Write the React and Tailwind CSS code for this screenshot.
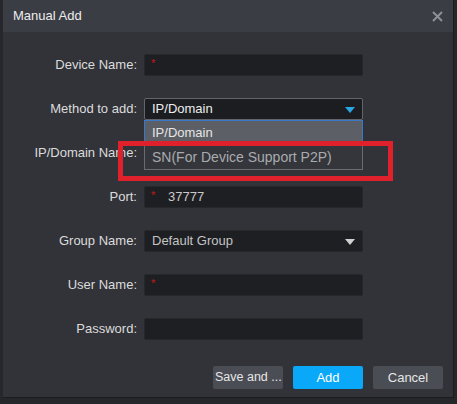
import React from 'react';

const font = { fontFamily: '"Liberation Sans", Arial, sans-serif' };

function Label({ children }) {
  return (
    <div className="w-[141px] shrink-0 whitespace-nowrap pr-[7px] text-right text-[13px] leading-[22px] text-[#dcdcdc]">
      {children}
    </div>
  );
}

function Star() {
  return <span className="absolute left-[6px] top-[1px] text-[11px] leading-[14px] text-[#c8161c]">*</span>;
}

function Input({ required, value }) {
  return (
    <div className="relative h-[22px] w-[219px] rounded-[2px] border border-[#26272b] bg-[#1e1f23]">
      {required && <Star />}
      {value && <span className="absolute left-[23px] top-0 text-[13px] leading-[20px] text-[#c9c9c9]">{value}</span>}
    </div>
  );
}

function Caret({ color }) {
  return (
    <svg width="10" height="6" viewBox="0 0 10 6" className="absolute right-[7px] top-[8px]">
      <path d="M0 0h10L5 6z" fill={color} />
    </svg>
  );
}

function Row({ label, children }) {
  return (
    <div className="flex h-[22px] items-center">
      <Label>{label}</Label>
      {children}
    </div>
  );
}

export default function App() {
  return (
    <div className="h-[404px] w-[457px] overflow-hidden bg-[#26272b] pl-[3px]" style={font}>
      <div className="relative flex h-[398px] w-[451px] flex-col border-b border-r border-[#1b1c1f] bg-[#313338]">
        {/* title bar */}
        <div className="flex h-[32px] shrink-0 items-center justify-between bg-[#3b3d44] pl-[10px] pr-[10px]">
          <span className="text-[13px] text-[#ececec]">Manual Add</span>
          <svg width="11" height="11" viewBox="0 0 11 11">
            <path d="M1 1l9 9M10 1l-9 9" stroke="#8e9095" strokeWidth="2" />
          </svg>
        </div>

        <div className="mt-[22px] flex flex-col gap-[22px]">
          <Row label="Device Name:">
            <Input required />
          </Row>

          <Row label="Method to add:">
            <div className="relative h-[22px] w-[219px] rounded-[2px] border border-[#62656b] bg-[#1c1d21]">
              <span className="absolute left-[7px] top-0 text-[13px] leading-[20px] text-[#ededed]">IP/Domain</span>
              <Caret color="#2aa6e6" />
              {/* open option list */}
              <div className="absolute left-[-1px] top-[21px] z-10 w-[219px]">
                <div className="h-[25px] border-x border-t border-[#3a78c8] bg-[#5c5f65] pl-[7px] text-[13px] leading-[24px] text-[#e6e6e6]">
                  IP/Domain
                </div>
                <div className="h-[25px] border border-t-0 border-[#686b70] bg-[#34363b] pl-[7px] text-[14px] leading-[24px] text-[#a9abae]">
                  SN(For Device Support P2P)
                </div>
              </div>
            </div>
          </Row>

          <Row label="IP/Domain Name:">
            <Input />
          </Row>

          <Row label="Port:">
            <Input required value="37777" />
          </Row>

          <Row label="Group Name:">
            <div className="relative h-[22px] w-[219px] rounded-[2px] border border-[#26272b] bg-[#1e1f23]">
              <span className="absolute left-[7px] top-0 text-[13px] leading-[20px] text-[#c4c4c4]">Default Group</span>
              <Caret color="#d0d0d0" />
            </div>
          </Row>

          <Row label="User Name:">
            <Input required />
          </Row>

          <Row label="Password:">
            <Input />
          </Row>
        </div>

        <div className="mt-[26px] flex justify-end gap-[10px] pr-[10px]">
          <button className="h-[23px] w-[70px] overflow-hidden whitespace-nowrap rounded-[2px] bg-[#4a4d54] pl-[2px] text-left text-[12.5px] text-[#e6e6e6]">
            Save and ...
          </button>
          <button className="h-[23px] w-[70px] rounded-[2px] bg-[#0aa8f8] text-[13px] text-white">Add</button>
          <button className="h-[23px] w-[70px] rounded-[2px] bg-[#4a4d54] text-[13px] text-[#e6e6e6]">Cancel</button>
        </div>

        {/* red highlight frame */}
        <div className="pointer-events-none absolute left-[115px] top-[141px] z-20 h-[40px] w-[275px] border-[5px] border-[#e0212b]" />
      </div>
    </div>
  );
}
